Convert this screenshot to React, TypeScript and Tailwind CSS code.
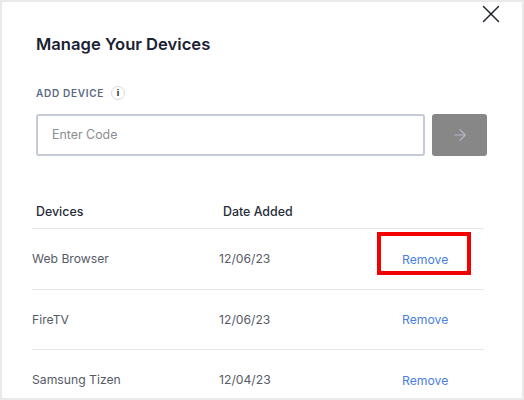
import { ArrowRight, X } from "lucide-react";

const devices = [
  { name: "Web Browser", date: "12/06/23", marked: true },
  { name: "FireTV", date: "12/06/23", marked: false },
  { name: "Samsung Tizen", date: "12/04/23", marked: false },
];

function DeviceRow({ name, date, marked }: { name: string; date: string; marked: boolean }) {
  return (
    <div className="flex h-[60.5px] shrink-0 items-center border-t border-[#e4e6ea] pt-[1px] text-[12.2px] text-[#565b66]">
      <span className="w-[187px]">{name}</span>
      <span className="w-[183px]">{date}</span>
      <span className="relative mt-[1px] text-[#4a80e0]">
        Remove
        {marked && (
          <span className="absolute left-[-25px] top-[-19px] h-[43px] w-[94px] border-4 border-[#f30000]" />
        )}
      </span>
    </div>
  );
}

export default function App() {
  return (
    <div className="h-[400px] w-[524px] overflow-hidden bg-[#e9e9e9] p-[2px] font-['Inter',sans-serif]">
      <div className="relative h-full w-full overflow-hidden bg-white pl-[30px] pr-[38px]">
        <button className="absolute right-[16.5px] top-[-3.5px] text-[#1c212b]">
          <X className="h-[30px] w-[30px]" strokeWidth={1.15} />
        </button>

        <div className="pl-[4px]">
          <h1 className="pt-[32px] text-[16.6px] font-semibold leading-5 text-[#1a2233]">Manage Your Devices</h1>

          <div className="mt-[31px] flex items-center gap-[7px]">
            <span className="text-[10px] font-semibold leading-4 tracking-[0.07em] text-[#5b6884]">ADD DEVICE</span>
            <span className="flex h-[14px] w-[14px] items-center justify-center rounded-full border border-[#d5d8de] text-[9px] font-bold text-[#1c212b]">
              i
            </span>
          </div>

          <div className="mr-[-3px] mt-[13px] flex gap-[7px]">
            <div className="flex h-[42px] w-[389px] items-center rounded-[3px] border-2 border-[#c5cad8] pl-[14px] text-[12.4px] text-[#8b8d92]">
              Enter Code
            </div>
            <button className="flex h-[42px] w-[55px] items-center justify-center rounded-[3px] bg-[#878787] text-[#b4b9c8]">
              <ArrowRight className="h-[18px] w-[18px]" strokeWidth={1.5} />
            </button>
          </div>

          <div className="mt-[47px] flex h-[18px] items-center text-[12.4px] font-medium text-[#262c38]">
            <span className="w-[187px]">Devices</span>
            <span>Date Added</span>
          </div>
        </div>

        <div className="mt-[7px] flex flex-col">
          {devices.map((device) => (
            <DeviceRow key={device.name} {...device} />
          ))}
        </div>
      </div>
    </div>
  );
}
